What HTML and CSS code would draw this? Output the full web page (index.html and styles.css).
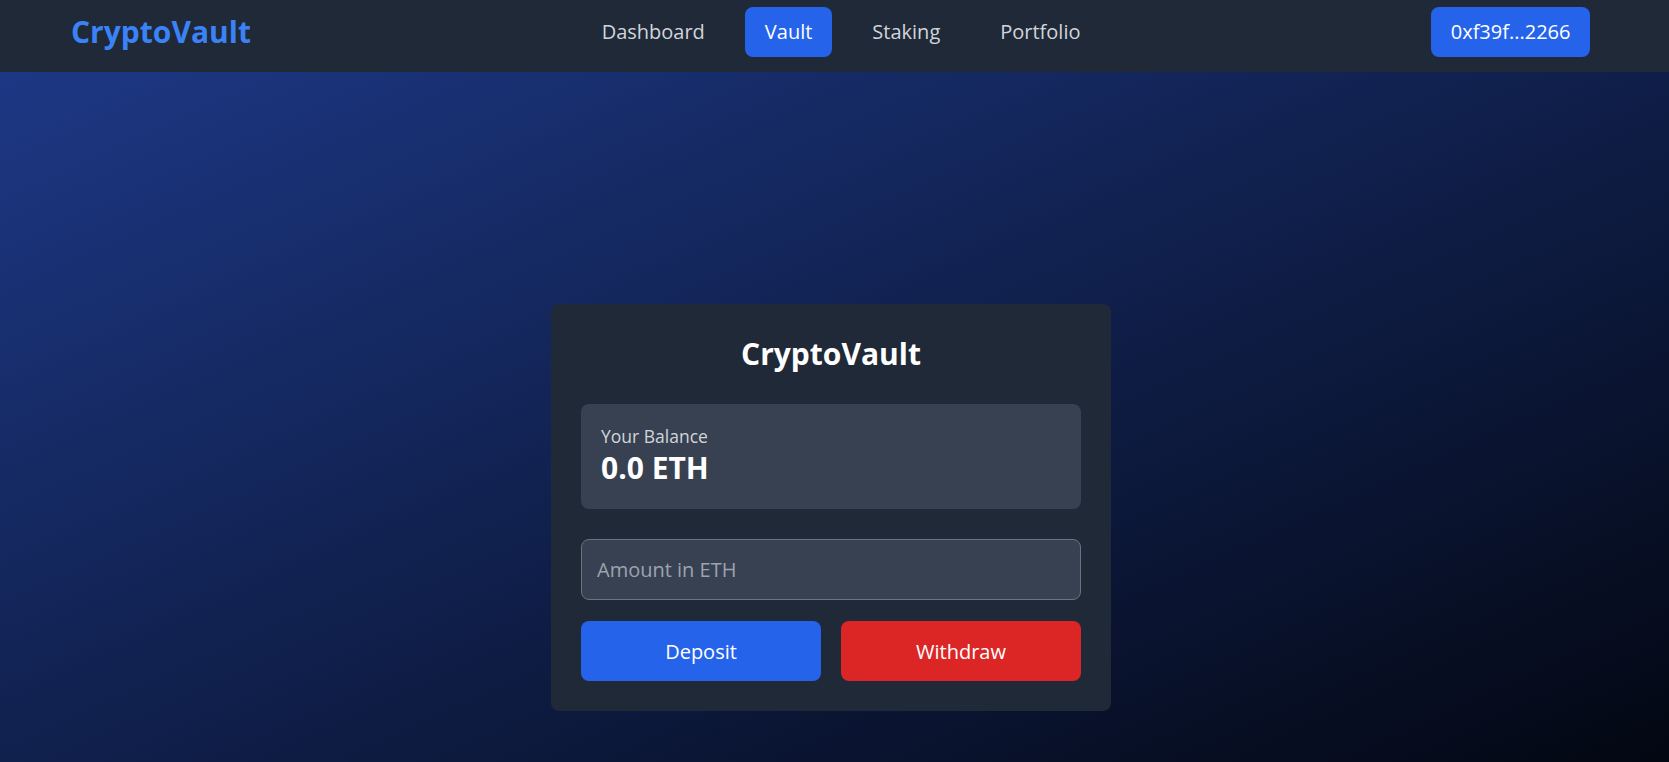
FILE: index.html
```html
<!DOCTYPE html>
<html lang="en">
<head>
<meta charset="utf-8">
<title>CryptoVault</title>
<link rel="stylesheet" href="styles.css">
</head>
<body>
<div class="page">
  <header class="nav">
    <div class="logo">CryptoVault</div>
    <nav class="links">
      <a class="link">Dashboard</a>
      <a class="link active">Vault</a>
      <a class="link">Staking</a>
      <a class="link">Portfolio</a>
    </nav>
    <button class="wallet">0xf39f...2266</button>
  </header>
  <main class="main">
    <section class="card">
      <h1 class="title">CryptoVault</h1>
      <div class="balance">
        <div class="balance-label">Your Balance</div>
        <div class="balance-value">0.0 ETH</div>
      </div>
      <input class="amount" type="text" placeholder="Amount in ETH">
      <div class="actions">
        <button class="btn deposit">Deposit</button>
        <button class="btn withdraw">Withdraw</button>
      </div>
    </section>
  </main>
</div>
</body>
</html>
```

FILE: styles.css
```css
* { box-sizing: border-box; }
html, body { margin: 0; padding: 0; }
body {
  font-family: "Open Sans", "Liberation Sans", sans-serif;
  color: #fff;
  min-height: 100vh;
  background: linear-gradient(to bottom right, #1e3a8a, #030712);
}
.page { min-height: 100vh; display: flex; flex-direction: column; }
.nav {
  height: 72px;
  background: #1f2937;
  display: flex;
  align-items: center;
  justify-content: space-between;
  padding: 0 79px 8px 71px;
}
.logo {
  font-size: 30px;
  font-weight: 700;
  line-height: 40px;
  color: #3b82f6;
}
.links { display: flex; gap: 20px; align-items: center; }
.link {
  font-size: 20px;
  line-height: 30px;
  padding: 10px 20px;
  border-radius: 8px;
  color: #d1d5db;
}
.link.active { background: #2563eb; color: #fff; }
.wallet {
  font-family: inherit;
  font-size: 20px;
  line-height: 30px;
  padding: 10px 19.5px;
  border: 0;
  border-radius: 8px;
  background: #2563eb;
  color: #fff;
}
.main {
  flex: 1;
  display: flex;
  justify-content: center;
  align-items: flex-start;
  padding: 232px 7px 0 0;
}
.card {
  width: 560px;
  background: #1f2937;
  border-radius: 8px;
  padding: 30px 30px 30px;
}
.title {
  margin: 0 0 30px;
  font-size: 30px;
  line-height: 40px;
  font-weight: 700;
  text-align: center;
}
.balance {
  background: #374151;
  border-radius: 8px;
  padding: 20px 20px 23px;
  margin-bottom: 30px;
}
.balance-label {
  font-size: 17.5px;
  line-height: 24px;
  color: #d1d5db;
}
.balance-value {
  margin-top: 2px;
  font-size: 30px;
  line-height: 36px;
  font-weight: 700;
}
.amount {
  display: block;
  width: 100%;
  height: 61px;
  margin: 0 0 21px;
  padding: 0 15px;
  background: #374151;
  border: 1px solid #6b7280;
  border-radius: 8px;
  font-family: inherit;
  font-size: 20px;
  color: #fff;
  outline: none;
}
.amount::placeholder { color: #9ca3af; }
.actions { display: flex; gap: 20px; }
.btn {
  flex: 1;
  height: 60px;
  border: 0;
  border-radius: 8px;
  font-family: inherit;
  font-size: 20px;
  color: #fff;
}
.deposit { background: #2563eb; }
.withdraw { background: #dc2626; }
```
